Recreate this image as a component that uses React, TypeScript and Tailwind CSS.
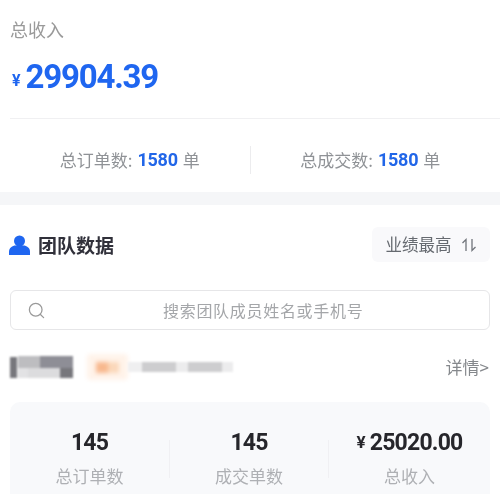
import { Search } from 'lucide-react';

const NUM = "font-['Roboto','Noto_Sans_CJK_SC',sans-serif]";

function StatText({ label, value }: { label: string; value: string }) {
  return (
    <div className="flex-1 flex items-center justify-center text-[17px] text-[#8f9296]">
      <span>{label}:</span>
      <span className={`${NUM} mx-[5px] font-bold text-[18px] tracking-[-0.3px] text-[#2166e8]`}>{value}</span>
      <span>单</span>
    </div>
  );
}

function Metric({ value, label, prefix, width }: { value: string; label: string; prefix?: boolean; width: string }) {
  return (
    <div className={`${width} flex flex-col items-center`}>
      <div className={`${NUM} h-[26px] flex items-center font-bold text-[23px] text-[#26262b] tracking-[-0.8px]`}>
        {prefix && <span className="mr-[5px] text-[17px]">¥</span>}
        {value}
      </div>
      <div className="mt-[8px] text-[17px] leading-[24px] text-[#aeb0b4]">{label}</div>
    </div>
  );
}

export default function App() {
  return (
    <div className="h-[494px] w-[500px] overflow-hidden bg-white blur-[0.6px] font-['Noto_Sans_CJK_SC','Noto_Sans',sans-serif]">
      <section className="h-[192px] pl-[10px]">
        <div className="pt-[17px] text-[18px] leading-[24px] text-[#9a9a9a]">总收入</div>
        <div className={`${NUM} mt-[17px] h-[38px] flex items-center pl-[2px] font-bold text-[#1f66f0]`}>
          <span className="mt-[7px] mr-[5px] text-[16px]">¥</span>
          <span className="text-[33px] tracking-[-1.2px]">29904.39</span>
        </div>
        <div className="mt-[22px] border-t border-[#f0f0f2]" />
        <div className="flex items-center h-[81px] pr-[10px]">
          <StatText label="总订单数" value="1580" />
          <div className="h-[28px] w-px bg-[#ececee]" />
          <StatText label="总成交数" value="1580" />
        </div>
      </section>

      <div className="h-[13px] bg-[#f5f6f8]" />

      <section className="px-[10px]">
        <div className="flex items-center justify-between pt-[22px]">
          <div className="flex items-center">
            <svg width="21" height="20" viewBox="0 0 21 20" className="-ml-[1px] fill-[#1f66f0]">
              <circle cx="10.5" cy="6" r="5.5" />
              <path d="M0 20v-3.5C0 13 3.5 10.500 6.500 10.500h8c3 0 6.500 2.500 6.500 6V20z" />
            </svg>
            <span className="ml-[8px] text-[19px] font-bold leading-[26px] text-[#30303a]">团队数据</span>
          </div>
          <div className="flex h-[35px] w-[118px] items-center justify-center rounded-[6px] bg-[#f9f9fb] text-[16.500px] text-[#666a70]">
            <span>业绩最高</span>
            <svg width="16" height="16" viewBox="0 0 16 16" fill="none" className="ml-[9px] stroke-[#70747a]" strokeWidth="1.3">
              <path d="M5 14V2.500L1.500 6" />
              <path d="M11 2v11.500L14.500 10" />
            </svg>
          </div>
        </div>

        <div className="mt-[28px] flex h-[40px] items-center rounded-[6px] border border-[#e6e6e8] pl-[16px]">
          <Search size={19} strokeWidth={1.6} className="text-[#9a9a9a]" />
          <span className="ml-[117px] text-[16px] tracking-[0.7px] text-[#a4a6a9]">搜索团队成员姓名或手机号</span>
        </div>

        <div className="mt-[23px] flex h-[28px] items-center">
          <div className="flex items-center blur-[1px]">
            <div className="mr-[1px] h-[21px] w-[7px] bg-[#77777c]" />
            <div className="grid h-[22px] w-[55px] grid-cols-[10px_12px_20px_13px] grid-rows-[12px_10px]">
              <div className="col-span-2 bg-[#bdbdc0]" />
              <div className="col-span-2 bg-[#8e8e96]" />
              <div className="bg-[#e2e2e4]" />
              <div className="col-span-2 bg-[#dcdcde]" />
              <div className="bg-[#77777c]" />
            </div>
          </div>
          <div className="ml-[14px] flex h-[26px] w-[41px] items-center justify-center rounded-[4px] bg-[#fff3ea] blur-[2px]">
            <div className="h-[11px] w-[12px] bg-[#f8b88e]" />
            <div className="h-[11px] w-[11px] bg-[#fbd8ba]" />
          </div>
          <div className="flex h-[10px] blur-[1px]">
            <div className="w-[14px] bg-[#efeff0]" />
            <div className="w-[34px] bg-[#cdcdcf]" />
            <div className="w-[12px] bg-[#ececed]" />
            <div className="w-[34px] bg-[#cdcdcf]" />
            <div className="w-[11px] bg-[#ececed]" />
          </div>
          <span className="ml-auto mr-[1px] text-[17px] text-[#85888c]">详情&gt;</span>
        </div>

        <div className="mt-[21px] flex h-[120px] rounded-t-[10px] bg-[#f8f9fb] pt-[28px]">
          <Metric value="145" label="总订单数" width="w-[159px]" />
          <div className="mt-[10px] h-[38px] w-px bg-[#f0f0f3]" />
          <Metric value="145" label="成交单数" width="w-[158px]" />
          <div className="mt-[10px] h-[38px] w-px bg-[#f0f0f3]" />
          <Metric value="25020.00" label="总收入" prefix width="flex-1" />
        </div>
      </section>
    </div>
  );
}
